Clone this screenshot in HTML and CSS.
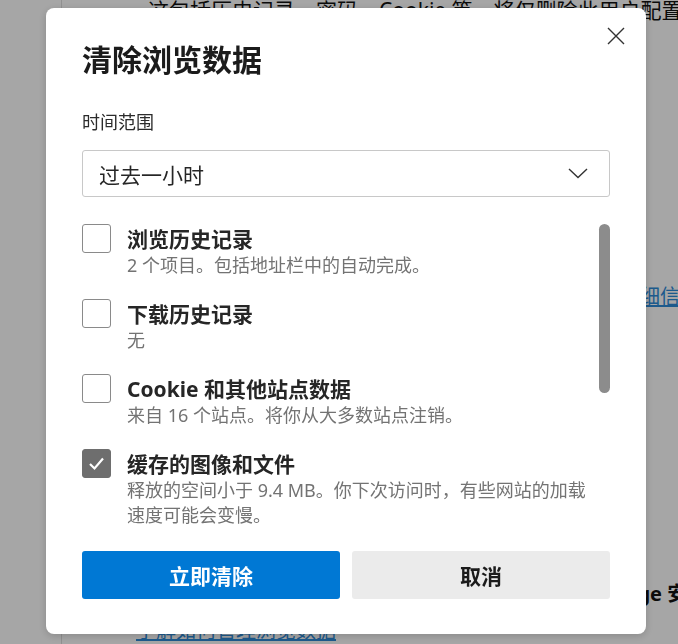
FILE: index.html
```html
<!DOCTYPE html>
<html lang="zh-CN">
<head>
<meta charset="utf-8">
<title>清除浏览数据</title>
<link rel="stylesheet" href="styles.css">
</head>
<body>
<div class="page">
  <aside class="sidebar"></aside>
  <main class="content">
    <p class="bg-line">这包括历史记录、密码、Cookie 等。将仅删除此用户配置中的数据。</p>
    <p class="bg-link-line">这将从你登录的所有已同步设备中清除浏览数据。<a class="bg-link" href="#">查看详细信息</a></p>
    <p class="bg-heading">阻止跟踪器，保持 Microsoft Edge 安全</p>
    <p class="bg-link-line2"><a class="bg-link" href="#">了解如何管理浏览数据</a></p>
  </main>
</div>
<div class="overlay"></div>

<section class="dialog" role="dialog" aria-label="清除浏览数据">
  <button class="close" aria-label="关闭">
    <svg width="18" height="18" viewBox="0 0 18 18"><path d="M1 1 L17 17 M17 1 L1 17" stroke="#333" stroke-width="1.4" fill="none"/></svg>
  </button>
  <h1 class="title">清除浏览数据</h1>
  <div class="field-label">时间范围</div>
  <div class="select">
    <span>过去一小时</span>
    <svg width="20" height="11" viewBox="0 0 20 11"><path d="M1 1 L10 9.5 L19 1" stroke="#333" stroke-width="1.4" fill="none"/></svg>
  </div>

  <div class="list-wrap">
    <div class="list">
      <div class="item">
        <span class="box"></span>
        <div class="text">
          <div class="label">浏览历史记录</div>
          <div class="sub">2 个项目。包括地址栏中的自动完成。</div>
        </div>
      </div>
      <div class="item">
        <span class="box"></span>
        <div class="text">
          <div class="label">下载历史记录</div>
          <div class="sub">无</div>
        </div>
      </div>
      <div class="item">
        <span class="box"></span>
        <div class="text">
          <div class="label">Cookie 和其他站点数据</div>
          <div class="sub">来自 16 个站点。将你从大多数站点注销。</div>
        </div>
      </div>
      <div class="item">
        <span class="box checked">
          <svg width="29" height="29" viewBox="0 0 29 29"><path d="M8 15 L12.5 19.5 L21 9.5" stroke="#fff" stroke-width="2.2" fill="none"/></svg>
        </span>
        <div class="text">
          <div class="label">缓存的图像和文件</div>
          <div class="sub">释放的空间小于 9.4 MB。你下次访问时，有些网站的加载<br>速度可能会变慢。</div>
        </div>
      </div>
      <div class="item">
        <span class="box"></span>
        <div class="text">
          <div class="label">密码</div>
          <div class="sub">无</div>
        </div>
      </div>
      <div class="item">
        <span class="box"></span>
        <div class="text">
          <div class="label">自动填充表单数据(包括表单和卡)</div>
          <div class="sub">无</div>
        </div>
      </div>
    </div>
    <div class="scrollbar"><div class="thumb"></div></div>
  </div>

  <div class="actions">
    <button class="btn primary">立即清除</button>
    <button class="btn secondary">取消</button>
  </div>
</section>
</body>
</html>
```

FILE: styles.css
```css
html, body {
  margin: 0;
  padding: 0;
  height: 100%;
  overflow: hidden;
}

body {
  background: #ffffff;
  font-family: "Noto Sans", "Noto Sans CJK SC", sans-serif;
  color: #000;
}

.page {
  display: flex;
  height: 100%;
  white-space: nowrap;
  overflow: hidden;
}

.sidebar {
  width: 61px;
  flex: none;
  border-right: 1px solid #dedede;
}

.content {
  padding-left: 74px;
  font-size: 20px;
  line-height: 28px;
}

.content p {
  margin: 0;
  color: #111;
}

.content .bg-line {
  margin-top: -4px;
  margin-left: 12px;
  font-size: 21px;
}

.content .bg-link-line {
  margin-top: 259px;
}

.bg-link {
  color: #2d8ad8;
  text-decoration: underline;
  margin-left: 4px;
}

.content .bg-heading {
  margin-top: 269px;
  margin-left: 212px;
  font-weight: 700;
}

.content .bg-link-line2 {
  margin-top: 9px;
}

.bg-link-line2 .bg-link {
  margin-left: 0;
}

.overlay {
  position: fixed;
  inset: 0;
  background: rgba(0, 0, 0, 0.35);
}

.dialog {
  position: fixed;
  left: 46px;
  top: 8px;
  width: 600px;
  height: 626px;
  box-sizing: border-box;
  padding: 32px 36px 35px 36px;
  background: #ffffff;
  border-radius: 8px;
  box-shadow: 0 2px 8px rgba(0, 0, 0, 0.18);
  display: flex;
  flex-direction: column;
  font-family: "Noto Sans", "Noto Sans CJK SC", sans-serif;
}

.close {
  position: absolute;
  top: 19px;
  right: 21px;
  width: 18px;
  height: 18px;
  padding: 0;
  border: 0;
  background: transparent;
  display: flex;
}

.title {
  margin: 0;
  font-size: 30px;
  line-height: 40px;
  font-weight: 700;
  color: #1b1b1b;
}

.field-label {
  margin-top: 30px;
  font-size: 18px;
  line-height: 24px;
  color: #2b2b2b;
}

.select {
  margin-top: 16px;
  height: 47px;
  box-sizing: border-box;
  border: 1px solid #c8c8c8;
  border-radius: 3px;
  display: flex;
  align-items: center;
  justify-content: space-between;
  padding: 0 21px 0 16px;
  font-size: 21px;
  color: #262626;
}

.list-wrap {
  margin-top: 16px;
  height: 322px;
  display: flex;
  gap: 4px;
}

.list {
  flex: 1;
  overflow: hidden;
  padding-top: 12px;
  display: flex;
  flex-direction: column;
  gap: 22px;
}

.item {
  display: flex;
  align-items: flex-start;
  gap: 16px;
  flex: none;
}

.box {
  flex: none;
  width: 29px;
  height: 29px;
  box-sizing: border-box;
  border: 1px solid #8a8a8a;
  border-radius: 3px;
  margin-top: -1px;
  display: flex;
}

.box.checked {
  background: #6e6e6e;
  border-color: #6e6e6e;
}

.box.checked svg {
  margin: -1px;
}

.text {
  flex: 1;
  min-width: 0;
}

.label {
  font-size: 21px;
  line-height: 28px;
  font-weight: 700;
  color: #262626;
}

.sub {
  font-size: 18px;
  line-height: 25px;
  color: #737373;
}

.scrollbar {
  width: 11px;
  flex: none;
}

.thumb {
  margin-top: 11px;
  height: 169px;
  width: 11px;
  border-radius: 6px;
  background: #8c8c8c;
}

.actions {
  margin-top: 16px;
  display: flex;
  gap: 12px;
}

.btn {
  flex: 1;
  height: 48px;
  border: 0;
  border-radius: 3px;
  font-family: "Noto Sans", "Noto Sans CJK SC", sans-serif;
  font-size: 21px;
  font-weight: 700;
  padding: 0;
}

.primary {
  background: #0078d4;
  color: #ffffff;
}

.secondary {
  background: #ebebeb;
  color: #1b1b1b;
}
```
